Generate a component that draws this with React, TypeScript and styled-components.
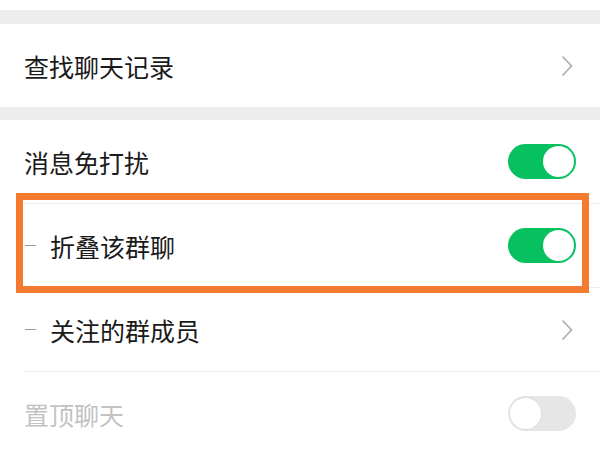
import React from "react";
import styled, { createGlobalStyle } from "styled-components";

const Global = createGlobalStyle`
  html, body { margin: 0; padding: 0; background: #ffffff; }
  body { font-family: "Noto Sans CJK SC", "Noto Sans", sans-serif; }
  * { box-sizing: border-box; }
`;

const Page = styled.div`
  width: 600px;
  height: 455px;
  overflow: hidden;
  background: #ffffff;
  display: flex;
  flex-direction: column;
`;

const TopStrip = styled.div`
  height: 10px;
  background: #ffffff;
  flex-shrink: 0;
`;

const Gap = styled.div<{ $h: number }>`
  height: ${(p) => p.$h}px;
  background: #ededed;
  flex-shrink: 0;
`;

const Section = styled.div`
  display: flex;
  flex-direction: column;
  background: #ffffff;
  flex-shrink: 0;
`;

const Row = styled.div<{ $right: number }>`
  height: 83px;
  display: flex;
  align-items: center;
  padding: 0 ${(p) => p.$right}px 0 24px;
  flex-shrink: 0;
`;

const Label = styled.span<{ $disabled?: boolean }>`
  flex: 1;
  font-family: "Noto Sans CJK SC", "Noto Sans", sans-serif;
  font-size: 25px;
  line-height: 1;
  padding-top: 2px;
  color: ${(p) => (p.$disabled ? "#c2c2c2" : "#1a1a1a")};
`;

const Dash = styled.span`
  width: 11px;
  height: 1.5px;
  background: #9a9a9a;
  margin: 0 14px 0 1px;
  flex-shrink: 0;
`;

const Divider = styled.div`
  height: 1px;
  margin-left: 24px;
  background: #ececec;
  flex-shrink: 0;
`;

const Toggle = styled.div<{ $on: boolean }>`
  width: 68px;
  height: 35px;
  border-radius: 18px;
  background: ${(p) => (p.$on ? "#07c160" : "#e6e6e6")};
  display: flex;
  align-items: center;
  justify-content: ${(p) => (p.$on ? "flex-end" : "flex-start")};
  padding: 2px;
  flex-shrink: 0;
`;

const Knob = styled.div<{ $on: boolean }>`
  width: 31px;
  height: 31px;
  border-radius: 50%;
  background: #ffffff;
  box-shadow: ${(p) => (p.$on ? "none" : "0 0 0 1px #dedede")};
`;

const Chevron = styled.svg`
  width: 12px;
  height: 22px;
  flex-shrink: 0;
`;

const HighlightWrap = styled.div`
  position: relative;
`;

const Highlight = styled.div`
  position: absolute;
  left: 16px;
  right: 11px;
  top: -11px;
  bottom: -6px;
  border: 7px solid #f47a2f;
  pointer-events: none;
`;

const Arrow = () => (
  <Chevron viewBox="0 0 12 22">
    <path d="M1.5 1.5 L10.5 11 L1.5 20.5" fill="none" stroke="#b2b2b2" strokeWidth="1.8" />
  </Chevron>
);

const Switch = ({ on }: { on: boolean }) => (
  <Toggle $on={on}>
    <Knob $on={on} />
  </Toggle>
);

export default function App() {
  return (
    <Page>
      <Global />
      <TopStrip />
      <Gap $h={14} />
      <Section>
        <Row $right={27}>
          <Label>查找聊天记录</Label>
          <Arrow />
        </Row>
      </Section>
      <Gap $h={13} />
      <Section>
        <Row $right={24}>
          <Label>消息免打扰</Label>
          <Switch on />
        </Row>
        <Divider />
        <HighlightWrap>
          <Row $right={24}>
            <Dash />
            <Label>折叠该群聊</Label>
            <Switch on />
          </Row>
          <Highlight />
        </HighlightWrap>
        <Divider />
        <Row $right={27}>
          <Dash />
          <Label>关注的群成员</Label>
          <Arrow />
        </Row>
        <Divider />
        <Row $right={24}>
          <Label $disabled>置顶聊天</Label>
          <Switch on={false} />
        </Row>
      </Section>
    </Page>
  );
}
